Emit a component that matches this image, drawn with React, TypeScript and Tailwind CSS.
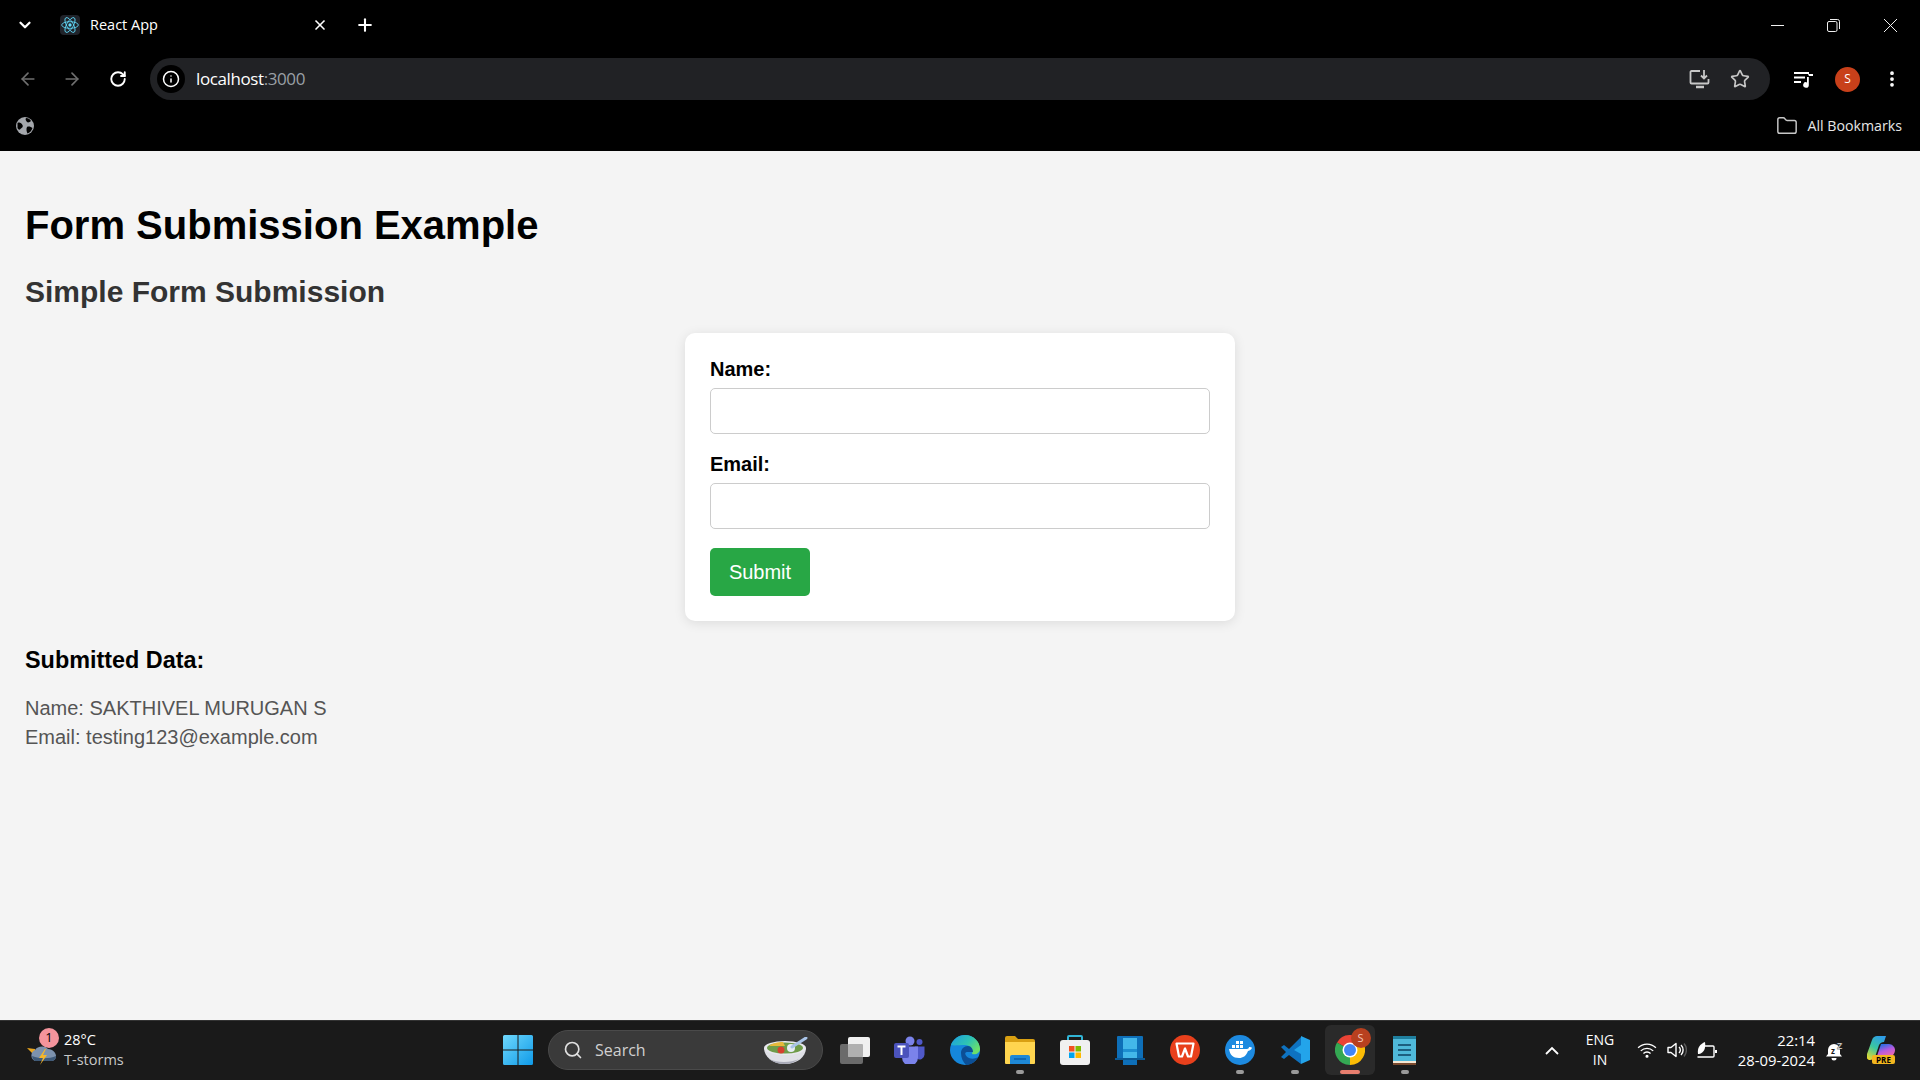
import React from 'react';
import { ChevronDown, X, Plus, ArrowLeft, ArrowRight, RotateCw, Info, Star, MoreVertical, Folder, Search } from 'lucide-react';

const ReactLogo = () => (
  <div className="flex h-[20px] w-[20px] items-center justify-center rounded-sm bg-[#20232a]">
    <svg width="20" height="20" viewBox="-12 -12 24 24" fill="none" stroke="#61dafb" strokeWidth="1">
      <circle r="2" fill="#61dafb" stroke="none" />
      <ellipse rx="10" ry="4" />
      <ellipse rx="10" ry="4" transform="rotate(60)" />
      <ellipse rx="10" ry="4" transform="rotate(120)" />
    </svg>
  </div>
);

const TabBar = () => (
  <div className="flex h-[58px] items-center bg-black pb-[8px] pl-[16px] text-white">
    <ChevronDown size={18} strokeWidth={3} />
    <div className="ml-[26px] flex w-[268px] items-center">
      <ReactLogo />
      <span className="ml-[10px] font-['Open_Sans',sans-serif] text-[14.5px]">React App</span>
      <X size={16} strokeWidth={2.5} className="ml-auto" />
    </div>
    <Plus size={20} strokeWidth={2.5} className="ml-[27px]" />
    <div className="ml-auto flex items-center pr-[23px] text-[#f0f0f0]">
      <svg width="13" height="13" viewBox="0 0 13 13" stroke="currentColor" strokeWidth="1">
        <path d="M0 6.500h13" />
      </svg>
      <svg width="13" height="13" viewBox="0 0 13 13" fill="none" stroke="currentColor" strokeWidth="1" className="ml-[43px]">
        <rect x="0.500" y="2.500" width="9.500" height="10" rx="1.500" />
        <path d="M3 0.500h7.500a2 2 0 0 1 2 2v7.500" />
      </svg>
      <svg width="13" height="13" viewBox="0 0 13 13" stroke="currentColor" strokeWidth="1" className="ml-[44px]">
        <path d="M0 0l13 13M13 0L0 13" />
      </svg>
    </div>
  </div>
);

const Toolbar = () => (
  <div className="flex h-[42px] items-center bg-black">
    <div className="flex h-[42px] w-[150px] items-center pl-[18px]">
      <ArrowLeft size={20} className="text-[#6f6f6f]" />
      <ArrowRight size={20} className="ml-[24px] text-[#6f6f6f]" />
      <RotateCw size={18} strokeWidth={2.5} className="ml-[27px] text-white" />
    </div>
    <div className="flex h-[42px] w-[1620px] items-center rounded-full bg-[#212225] pl-[7px] pr-[20px]">
      <div className="flex h-[28px] w-[28px] items-center justify-center rounded-full bg-black">
        <Info size={18} strokeWidth={2} className="text-white" />
      </div>
      <span className="ml-[11px] font-['Open_Sans',sans-serif] text-[17px] tracking-[-0.4px] text-white">localhost<span className="text-[#9aa0a6]">:3000</span></span>
      <div className="ml-auto flex items-center text-[#c7c7c7]">
        <svg width="22" height="20" viewBox="0 0 22 20" fill="none" stroke="currentColor" strokeWidth="1.800">
          <path d="M11 2H2.500a1 1 0 0 0-1 1v10.500a1 1 0 0 0 1 1h16a1 1 0 0 0 1-1V10" />
          <path d="M7 18h8" strokeWidth="2.500" />
          <path d="M15 1v8M12 6.500l3 3 3-3" />
        </svg>
        <Star size={20} strokeWidth={2} className="ml-[19px]" />
      </div>
    </div>
    <div className="flex h-[42px] flex-1 items-center text-white">
      <svg width="20" height="18" viewBox="0 0 20 18" fill="currentColor" className="ml-[24px]">
        <path d="M0 2h15v2H0zM0 6.500h11v2H0zM0 11h7v2H0z" />
        <path d="M13 7h1.800v8a2.800 2.800 0 1 1-1.800-2.600zM14 4h5v2h-4z" />
      </svg>
      <div className="ml-[21px] flex h-[25px] w-[25px] items-center justify-center rounded-full bg-[#c8401a] font-['Open_Sans',sans-serif] text-[12px] text-white">S</div>
      <MoreVertical size={20} strokeWidth={2.500} className="ml-[22px]" />
    </div>
  </div>
);

const BookmarksBar = () => (
  <div className="flex h-[51px] items-center bg-black pl-[16px] pr-[18px]">
    <svg width="18" height="18" viewBox="0 0 18 18" className="text-[#a4a7ac]">
      <circle cx="9" cy="9" r="9" fill="currentColor" />
      <path d="M1.500 6c2-1 4 0 5 2s-1 3-2 4-2 1-3-1zM10 1c2 0 4 1 5 3-1 1-3 2-4 1s-2-3-1-4zM11 10c2-1 4 0 5.500 1-1 3-3 5-5 5.500-1-2-1.500-4.500-.500-6.500z" fill="#000" />
    </svg>
    <div className="ml-auto flex items-center">
      <Folder size={22} strokeWidth={1.600} className="text-[#c7c7c7]" />
      <span className="ml-[9px] font-['Open_Sans',sans-serif] text-[14.2px] text-[#e6e6e6]">All Bookmarks</span>
    </div>
  </div>
);

const Page = () => (
  <main className="flex-1 bg-[#f4f4f4] px-[25px] font-['Liberation_Sans',sans-serif]">
    <h1 className="pt-[51px] text-[40px] font-bold leading-[46px] text-black">Form Submission Example</h1>
    <h2 className="mt-[27px] text-[30px] font-bold leading-[34px] text-[#333]">Simple Form Submission</h2>
    <form className="mx-auto mt-[24px] w-[550px] rounded-[10px] bg-white p-[25px] shadow-[0_2px_12px_rgba(0,0,0,0.1)]">
      <label className="block text-[20px] font-bold leading-[23px] text-black">Name:</label>
      <input className="mt-[7px] block h-[46px] w-full rounded-[5px] border border-[#ccc] bg-white" />
      <label className="mt-[19px] block text-[20px] font-bold leading-[23px] text-black">Email:</label>
      <input className="mt-[7px] block h-[46px] w-full rounded-[5px] border border-[#ccc] bg-white" />
      <button type="button" className="mt-[19px] h-[48px] w-[100px] rounded-[5px] bg-[#28a745] text-[20px] text-white">Submit</button>
    </form>
    <h3 className="mt-[26px] text-[23.400px] font-bold leading-[27px] text-black">Submitted Data:</h3>
    <p className="mt-[20px] text-[20px] leading-[29px] text-[#555]">Name: SAKTHIVEL MURUGAN S<br />Email: testing123@example.com</p>
  </main>
);

const WinLogo = () => (
  <svg width="30" height="30" viewBox="0 0 30 30">
    <defs>
      <linearGradient id="win" x1="0" y1="0" x2="1" y2="1">
        <stop offset="0" stopColor="#6fd8fc" />
        <stop offset="1" stopColor="#0f9ae8" />
      </linearGradient>
    </defs>
    <path d="M0 1.500A1.500 1.500 0 0 1 1.500 0h13v14.500H0zM15.500 0h13A1.500 1.500 0 0 1 30 1.500v13H15.500zM0 15.500h14.500V30h-13A1.500 1.500 0 0 1 0 28.500zM15.500 15.500H30v13a1.500 1.500 0 0 1-1.500 1.500h-13z" fill="url(#win)" />
  </svg>
);

const Task = ({ children, dot, active }: { children: React.ReactNode; dot?: boolean; active?: boolean }) => (
  <div className="flex w-[55px] justify-center">
    <div className={`relative flex h-[50px] w-[50px] items-center justify-center rounded-md ${active ? 'bg-[#2a2a2a]' : ''}`}>
      {children}
      {dot && <span className="absolute bottom-[1px] h-[4px] w-[8px] rounded-full bg-[#9a9a9a]" />}
      {active && <span className="absolute bottom-[1px] h-[4px] w-[20px] rounded-full bg-[#e87e6e]" />}
    </div>
  </div>
);

const Taskbar = () => (
  <footer className="flex h-[60px] items-center border-t border-[#333] bg-[#1a1a1a] pb-[1px] font-['Open_Sans',sans-serif] text-white">
    <div className="flex w-[503px] items-center pl-[27px]">
      <div className="relative h-[40px] w-[37px]">
        <svg width="30" height="21" viewBox="0 0 30 21" className="absolute left-0 top-[14px]">
          <path d="M0 4l8 1 0 7z" fill="#e9a51f" />
          <path d="M8 17a6 6 0 0 1 0-11c2-4 10-5 13-1 5 0 8 4 8 7 0 3-2 5-5 5z" fill="#7d92ad" />
          <path d="M8 17a6 6 0 0 1-3-5c8 3 17 3 24 0 0 3-2 5-5 5z" fill="#3f5a78" />
          <path d="M18 5l-6 9h4l-3 7 7-10h-4l3-6z" fill="#f5b72b" />
        </svg>
        <span className="absolute left-[12px] top-[-2px] flex h-[20px] w-[20px] items-center justify-center rounded-full bg-[#f4949c] text-[13px] text-black">1</span>
      </div>
      <div className="text-[14.500px] leading-[20px]">
        <div>28°C</div>
        <div className="text-[#c8c8c8]">T-storms</div>
      </div>
    </div>
    <WinLogo />
    <div className="ml-[15px] flex h-[40px] w-[275px] items-center rounded-full border border-[#4a4a4a] bg-[#3a3a3a] pl-[14px] pr-[14px]">
      <Search size={20} strokeWidth={2} className="text-[#e0e0e0]" />
      <span className="ml-[12px] text-[16px] text-[#d0d0d0]">Search</span>
      <svg width="45" height="27" viewBox="0 0 45 27" className="ml-auto">
        <path d="M1 11c0 9 9 16 21 16s21-7 21-16z" fill="#dfe0e6" />
        <path d="M6 22c8 4 22 4 30 0-4 3-9 5-15 5s-11-2-15-5z" fill="#a9abb8" />
        <ellipse cx="22" cy="11" rx="21" ry="7" fill="#e8e8ee" />
        <ellipse cx="22" cy="11" rx="18" ry="5.500" fill="#6f9c4a" />
        <path d="M6 9c3-3 9-4 14-4l2 4c-6 0-11 0-16 0z" fill="#e6b93a" />
        <circle cx="18" cy="13" r="3.500" fill="#d6402f" />
        <circle cx="28" cy="11" r="4" fill="#e6edf5" />
        <path d="M29 10L43 1" stroke="#a9c4e8" strokeWidth="3" strokeLinecap="round" />
      </svg>
    </div>
    <div className="ml-[4px] flex items-center">
      <Task>
        <svg width="30" height="27" viewBox="0 0 30 27">
          <rect x="0" y="7" width="23" height="20" rx="2" fill="#6b6b6b" />
          <rect x="8" y="0" width="22" height="20" rx="2" fill="#f0f0f0" />
          <rect x="8" y="7" width="15" height="13" rx="1" fill="#b0b0b0" />
        </svg>
      </Task>
      <Task>
        <svg width="31" height="28" viewBox="0 0 31 28">
          <circle cx="16" cy="5" r="4.500" fill="#7b83eb" />
          <circle cx="25.500" cy="6" r="3" fill="#5059c9" />
          <path d="M21 10.500h9.500v8a5 5 0 0 1-8 4z" fill="#5059c9" />
          <path d="M8 10.500h16v11a6.500 6.500 0 0 1-16 0z" fill="#7b83eb" />
          <rect x="0" y="7" width="15" height="15" rx="2" fill="#4b53bc" />
          <path d="M3.500 10.500h8M7.500 10.500v8.500" stroke="#fff" strokeWidth="2" />
        </svg>
      </Task>
      <Task>
        <svg width="30" height="30" viewBox="0 0 30 30">
          <defs>
            <linearGradient id="edgeTop" x1="0" y1="0" x2="1" y2="0.600">
              <stop offset="0" stopColor="#1b9de2" />
              <stop offset="0.600" stopColor="#2fc4b2" />
              <stop offset="1" stopColor="#6ce06a" />
            </linearGradient>
          </defs>
          <circle cx="15" cy="15" r="15" fill="#1587dc" />
          <path d="M1 10C3 4 9 0 15 0c9 0 15 7 15 14 0 4-4 6-8 5 2-5-2-9-7-9-6 0-11 1-14 0z" fill="url(#edgeTop)" />
          <path d="M11 18c0-4 3-7 7-7 3 0 5 3 5 6h-6c-3 0-2 4 2 6 3 1 6 1 9-1-3 5-7 8-12 8-3-3-5-7-5-12z" fill="#0c4f96" />
        </svg>
      </Task>
      <Task dot>
        <svg width="30" height="28" viewBox="0 0 30 28">
          <path d="M0 2a2 2 0 0 1 2-2h8l3 3h15a2 2 0 0 1 2 2v3H0z" fill="#d9a012" />
          <path d="M0 6h30v21a1 1 0 0 1-1 1H1a1 1 0 0 1-1-1z" fill="#ffd54f" />
          <path d="M5 28v-7a2 2 0 0 1 2-2h16a2 2 0 0 1 2 2v7z" fill="#1e88d6" />
          <path d="M9 23h12" stroke="#0b5ea8" strokeWidth="1.500" />
        </svg>
      </Task>
      <Task>
        <svg width="30" height="30" viewBox="0 0 30 30">
          <path d="M8 7V2a1 1 0 0 1 1-1h12a1 1 0 0 1 1 1v5" fill="none" stroke="#31b5d6" strokeWidth="2" />
          <rect x="0" y="5" width="30" height="25" rx="3" fill="#f0f0f0" />
          <rect x="9" y="11" width="5.500" height="5.500" fill="#f25022" />
          <rect x="15.500" y="11" width="5.500" height="5.500" fill="#7fba00" />
          <rect x="9" y="17.500" width="5.500" height="5.500" fill="#00a4ef" />
          <rect x="15.500" y="17.500" width="5.500" height="5.500" fill="#ffb900" />
        </svg>
      </Task>
      <Task>
        <svg width="30" height="30" viewBox="0 0 30 30">
          <rect x="2" y="1" width="26" height="23" rx="1" fill="#0e6fb8" />
          <rect x="8" y="3" width="14" height="21" fill="#43b7ea" />
          <rect x="8" y="14" width="14" height="3" fill="#1d8fd2" />
          <rect x="8" y="24" width="14" height="6" fill="#0e6fb8" />
          <rect x="0" y="23" width="30" height="2" fill="#0b5a96" />
        </svg>
      </Task>
      <Task>
        <svg width="30" height="30" viewBox="0 0 30 30" fill="none">
          <circle cx="15" cy="15" r="15" fill="#e8401c" />
          <path d="M6.500 8.500h17l-2.500 13h-3l-3-8-3 8H9z" stroke="#fff" strokeWidth="2.200" strokeLinejoin="round" />
        </svg>
      </Task>
      <Task dot>
        <svg width="30" height="30" viewBox="0 0 30 30">
          <circle cx="15" cy="15" r="15" fill="#1d8ae0" />
          <path d="M4 14h18c1 0 2-1 2-2 1 0 3 0 3 1-1 2-3 3-4 3-2 5-5 7-9 7-6 0-9-3-10-9z" fill="#fff" />
          <path d="M7 10h3v3H7zM11 10h3v3h-3zM15 10h3v3h-3zM11 6h3v3h-3zM15 6h3v3h-3z" fill="#fff" />
        </svg>
      </Task>
      <Task dot>
        <svg width="30" height="30" viewBox="0 0 30 30">
          <path d="M21 2L9 14 4 10 1 12l5 5-5 5 3 2 5-4 12 9z" fill="#0e72c0" />
          <path d="M21 1l9 4v20l-9 4V19l-7-4 7-5z" fill="#23a4ea" />
        </svg>
      </Task>
      <Task active>
        <svg width="30" height="30" viewBox="0 0 30 30">
          <path d="M15 15L2 7.500A15 15 0 0 1 28 7.500z" fill="#ea4335" />
          <path d="M15 15L28 7.500A15 15 0 0 1 15 30z" fill="#fbbc05" />
          <path d="M15 15L15 30A15 15 0 0 1 2 7.500z" fill="#34a853" />
          <circle cx="15" cy="15" r="7.500" fill="#fff" />
          <circle cx="15" cy="15" r="6" fill="#4285f4" />
        </svg>
        <span className="absolute right-[4px] top-[3px] flex h-[20px] w-[20px] items-center justify-center rounded-full bg-[#b8401f] text-[11px] text-[#f4c9bb]">S</span>
      </Task>
      <Task dot>
        <svg width="23" height="30" viewBox="0 0 23 30">
          <rect x="0" y="2" width="23" height="24" fill="#4fb9da" />
          <rect x="0" y="26" width="23" height="2" fill="#f4e7d4" />
          <rect x="0" y="28" width="23" height="2" fill="#7a4a2e" />
          <path d="M0 1h23v3H0z" fill="#1f7f9e" />
          <path d="M5 10h13M5 15h13M5 20h13" stroke="#1d5f80" strokeWidth="2" />
        </svg>
      </Task>
    </div>
    <div className="ml-auto flex items-center pr-[25px]">
      <svg width="14" height="9" viewBox="0 0 14 9" fill="none" stroke="#fff" strokeWidth="1.800">
        <path d="M1 8l6-6 6 6" />
      </svg>
      <div className="ml-[26px] w-[30px] text-center text-[14px] leading-[20px]">ENG<br />IN</div>
      <svg width="20" height="16" viewBox="0 0 22 18" fill="none" stroke="#fff" strokeWidth="1.500" className="ml-[22px]">
        <path d="M1 6.500a14 14 0 0 1 20 0M4 10a10 10 0 0 1 14 0M7 13a5.500 5.500 0 0 1 8 0" />
        <circle cx="11" cy="16" r="1" fill="#fff" />
      </svg>
      <svg width="20" height="16" viewBox="0 0 20 16" fill="none" stroke="#fff" strokeWidth="1.400" className="ml-[10px]">
        <path d="M1 5.500h3L9 1.500v13L4 10.500H1z" strokeLinejoin="round" />
        <path d="M12 5a4 4 0 0 1 0 6M14 3a7 7 0 0 1 0 10" />
        <path d="M17 1.500a10 10 0 0 1 0 13" stroke="#5a5a5a" />
      </svg>
      <svg width="20" height="17" viewBox="0 0 20 17" fill="none" stroke="#fff" strokeWidth="1.400" className="ml-[10px]">
        <path d="M7 4h9a1 1 0 0 1 1 1v9a1 1 0 0 1-1 1H0.500" />
        <path d="M19 8v3" strokeWidth="2" />
        <path d="M1 12C0 6 3 2 8 0c1 6-1 11-6 12z" fill="#fff" stroke="none" />
      </svg>
      <div className="ml-[20px] mb-[1px] w-[78px] text-right text-[14.800px] leading-[20px]">22:14<br />28-09-2024</div>
      <svg width="22" height="22" viewBox="0 0 22 22" className="ml-[11px]">
        <path d="M8 5a6 6 0 0 0-6 6v4l-2 2.500h16L14 15v-4a6 6 0 0 0-6-6z" fill="#fff" />
        <path d="M5.500 19a2.500 2.500 0 0 0 5 0z" fill="#fff" />
        <text x="5" y="15" fontSize="8" fontWeight="700" fill="#1a1a1a" fontFamily="'Open Sans',sans-serif">z</text>
        <text x="11" y="10" fontSize="9" fontWeight="700" fill="#fff" stroke="#1a1a1a" strokeWidth="0.300" fontFamily="'Open Sans',sans-serif">Z</text>
      </svg>
      <div className="relative ml-[19px] h-[28px] w-[28px]">
        <svg width="28" height="24" viewBox="0 0 28 24">
          <defs>
            <linearGradient id="copA" x1="0.700" y1="0" x2="0.200" y2="1">
              <stop offset="0" stopColor="#2f9de8" />
              <stop offset="0.500" stopColor="#39c6a0" />
              <stop offset="1" stopColor="#e8d92e" />
            </linearGradient>
            <linearGradient id="copB" x1="0.300" y1="0" x2="0.800" y2="1">
              <stop offset="0" stopColor="#2170e0" />
              <stop offset="0.500" stopColor="#b55ae0" />
              <stop offset="1" stopColor="#f06aa8" />
            </linearGradient>
          </defs>
          <path d="M10 0h9l-2 6c-2 0-4 1-5 3l-4 12c-1 2-3 3-5 3-3 0-4-3-3-6l5-14c1-3 3-4 5-4z" fill="url(#copA)" />
          <path d="M14 8h8c3 0 6 3 6 6s-2 6-5 6h-13z" fill="url(#copB)" />
        </svg>
        <span className="absolute bottom-0 right-0 flex h-[9px] w-[23px] items-center justify-center rounded-[2px] bg-[#f2b61f] text-[8px] font-bold text-black">PRE</span>
      </div>
    </div>
  </footer>
);

export default function App() {
  return (
    <div className="flex h-[1080px] w-[1920px] flex-col overflow-hidden">
      <TabBar />
      <Toolbar />
      <BookmarksBar />
      <Page />
      <Taskbar />
    </div>
  );
}
